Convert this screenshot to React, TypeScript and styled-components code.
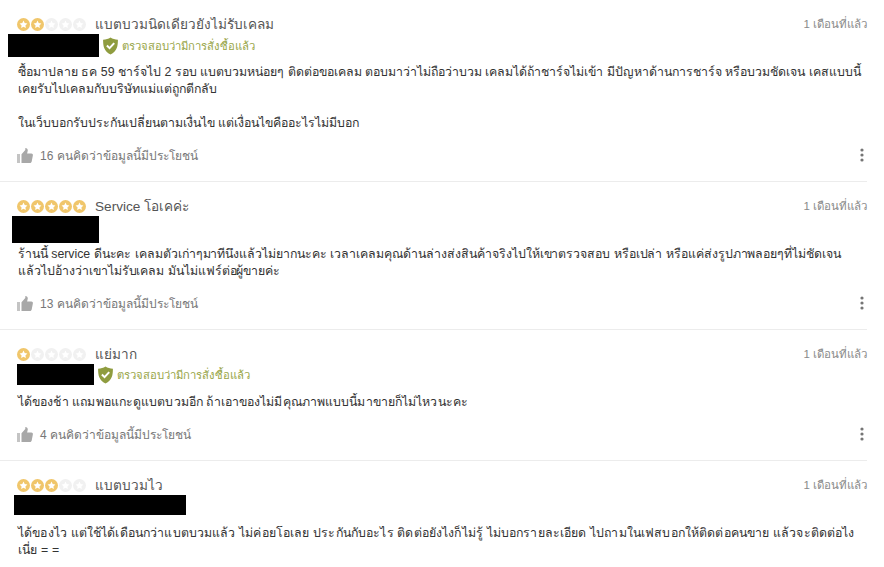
import React from 'react'
import styled, { createGlobalStyle } from 'styled-components'

const GlobalStyle = createGlobalStyle`
    html, body {
        margin: 0;
        padding: 0;
        background: #fff;
    }
    body {
        font-family: "Liberation Sans", Arial, sans-serif;
        overflow: hidden;
    }
`

type ReviewData = {
    stars: number
    title: string
    maskLeft: number
    maskWidth: number
    maskHeight: number
    verified: boolean
    body: string[]
    helpful?: string
    bodyGap: number
    tracking: number
    height: number
}

const reviews: ReviewData[] = [
    {
        stars: 2,
        title: 'แบตบวมนิดเดียวยังไม่รับเคลม',
        maskLeft: 8,
        maskWidth: 91,
        maskHeight: 23,
        verified: true,
        body: [
            'ซื้อมาปลาย ธค 59 ชาร์จไป 2 รอบ แบตบวมหน่อยๆ ติดต่อขอเคลม ตอบมาว่าไม่ถือว่าบวม เคลมได้ถ้าชาร์จไม่เข้า มีปัญหาด้านการชาร์จ หรือบวมชัดเจน เคสแบบนี้',
            'เคยรับไปเคลมกับบริษัทแม่แต่ถูกตีกลับ',
            '',
            'ในเว็บบอกรับประกันเปลี่ยนตามเงื่นไข แต่เงื่อนไขคืออะไรไม่มีบอก',
        ],
        helpful: '16 คนคิดว่าข้อมูลนี้มีประโยชน์',
        bodyGap: 7,
        tracking: 0,
        height: 182,
    },
    {
        stars: 5,
        title: 'Service โอเคค่ะ',
        maskLeft: 12,
        maskWidth: 87,
        maskHeight: 27,
        verified: false,
        body: [
            'ร้านนี้ service ดีนะคะ เคลมตัวเก่าๆมาทีนึงแล้วไม่ยากนะคะ เวลาเคลมคุณด้านล่างส่งสินค้าจริงไปให้เขาตรวจสอบ หรือเปล่า หรือแค่ส่งรูปภาพลอยๆที่ไม่ชัดเจน',
            'แล้วไปอ้างว่าเขาไม่รับเคลม มันไม่แฟร์ต่อผู้ขายค่ะ',
        ],
        helpful: '13 คนคิดว่าข้อมูลนี้มีประโยชน์',
        bodyGap: 3,
        tracking: -0.03,
        height: 148,
    },
    {
        stars: 1,
        title: 'แย่มาก',
        maskLeft: 17,
        maskWidth: 77,
        maskHeight: 21,
        verified: true,
        body: ['ได้ของช้า แถมพอแกะดูแบตบวมอีก ถ้าเอาของไม่มีคุณภาพแบบนี้มาขายก็ไม่ไหวนะคะ'],
        helpful: '4 คนคิดว่าข้อมูลนี้มีประโยชน์',
        bodyGap: 9,
        tracking: 0.1,
        height: 131,
    },
    {
        stars: 3,
        title: 'แบตบวมไว',
        maskLeft: 14,
        maskWidth: 172,
        maskHeight: 20,
        verified: false,
        body: [
            'ได้ของไว แต่ใช้ได้เดือนกว่าแบตบวมแล้ว ไม่ค่อยโอเลย ประกันกับอะไร ติดต่อยังไงก็ไม่รู้ ไม่บอกรายละเอียด ไปถามในเฟสบอกให้ติดต่อคนขาย แล้วจะติดต่อไง',
            'เนี่ย = =',
        ],
        bodyGap: 10,
        tracking: 0.14,
        height: 106,
    },
]

const Star: React.FC<{ on: boolean }> = ({ on }) => (
    <svg width="13" height="13" viewBox="0 0 13 13">
        <circle cx="6.5" cy="6.5" r="6.5" fill={on ? '#f0c66b' : '#f1f1f1'} />
        <path
            d="M6.5 2.6l1.2 2.5 2.7.4-2 1.9.5 2.7-2.4-1.3-2.4 1.3.5-2.7-2-1.9 2.7-.4z"
            fill="#fff"
        />
    </svg>
)

const Shield = () => (
    <svg width="17" height="18" viewBox="0 0 16 17">
        <path
            d="M8 .5c2 1.300 4.300 2 7 2.200 0 6-.8 11-7 13.800C1.800 13.700 1 8.700 1 2.700 3.700 2.500 6 1.800 8 .5z"
            fill="#8f9c3f"
        />
        <path d="M4.600 8l2.500 2.500 4.400-4.700" fill="none" stroke="#fff" strokeWidth="1.900" />
    </svg>
)

const Thumb = () => (
    <svg width="16" height="15" viewBox="0 0 16 15">
        <path d="M0 6h3v9H0z" fill="#c4c4c4" />
        <path
            d="M4.500 6.200L8.300 2V0c1.600 0 2.500 1.100 2.500 2.500L10.100 5.500h4.300c1 0 1.600.8 1.500 1.700l-1.200 6.300c-.2.900-.8 1.500-1.700 1.500H4.500z"
            fill="#a8a8a8"
        />
    </svg>
)

const Dots = () => (
    <svg width="4" height="14" viewBox="0 0 4 14">
        <circle cx="2" cy="2" r="1.600" fill="#757575" />
        <circle cx="2" cy="7" r="1.600" fill="#757575" />
        <circle cx="2" cy="12" r="1.600" fill="#757575" />
    </svg>
)

const Page = styled.div`
    width: 884px;
    height: 567px;
    overflow: hidden;
    background: #fff;
`

const Item = styled.section<{ $height: number; $last: boolean }>`
    height: ${p => p.$height}px;
    box-sizing: border-box;
    width: 867px;
    padding-top: 15px;
    border-bottom: ${p => (p.$last ? 'none' : '1px solid #ececec')};
`

const Head = styled.div`
    display: flex;
    align-items: center;
    height: 18px;
    padding-left: 17px;
`

const Stars = styled.div`
    display: flex;
    gap: 1px;
    width: 78px;
`

const Title = styled.div`
    flex: 1;
    font-size: 13.600px;
    color: #555;
`

const When = styled.div`
    font-size: 11.500px;
    color: #8a8a8a;
`

const Author = styled.div<{ $left: number }>`
    display: flex;
    align-items: center;
    gap: 3px;
    padding-left: ${p => p.$left}px;
    margin-top: 1px;
`

const Mask = styled.div<{ $width: number; $height: number }>`
    width: ${p => p.$width}px;
    height: ${p => p.$height}px;
    background: #000;
`

const Verified = styled.div`
    display: flex;
    align-items: center;
    gap: 3px;
    font-size: 11.300px;
    color: #98a547;
`

const Body = styled.div<{ $gap: number; $tracking: number }>`
    margin-top: ${p => p.$gap}px;
    padding-left: 18px;
    font-size: 12.350px;
    line-height: 17px;
    letter-spacing: ${p => p.$tracking}px;
    color: #333;
    white-space: nowrap;
`

const Line = styled.div`
    min-height: 17px;
`

const Foot = styled.div`
    display: flex;
    align-items: center;
    margin-top: 14px;
    padding-left: 17px;
    height: 18px;
    color: #777;
    font-size: 12px;
`

const Helpful = styled.div`
    flex: 1;
    display: flex;
    align-items: center;
    gap: 7px;
`

const More = styled.div`
    display: flex;
    padding-right: 3px;
`

const App: React.FC = () => (
    <Page>
        <GlobalStyle />
        {reviews.map((r, i) => (
            <Item key={r.title} $height={r.height} $last={i === reviews.length - 1}>
                <Head>
                    <Stars>
                        {[1, 2, 3, 4, 5].map(n => (
                            <Star key={n} on={n <= r.stars} />
                        ))}
                    </Stars>
                    <Title>{r.title}</Title>
                    <When>1 เดือนที่แล้ว</When>
                </Head>
                <Author $left={r.maskLeft}>
                    <Mask $width={r.maskWidth} $height={r.maskHeight} />
                    {r.verified && (
                        <Verified>
                            <Shield />
                            ตรวจสอบว่ามีการสั่งซื้อแล้ว
                        </Verified>
                    )}
                </Author>
                <Body $gap={r.bodyGap} $tracking={r.tracking}>
                    {r.body.map((line, n) => (
                        <Line key={n}>{line}</Line>
                    ))}
                </Body>
                {r.helpful && (
                    <Foot>
                        <Helpful>
                            <Thumb />
                            {r.helpful}
                        </Helpful>
                        <More>
                            <Dots />
                        </More>
                    </Foot>
                )}
            </Item>
        ))}
    </Page>
)

export default App
